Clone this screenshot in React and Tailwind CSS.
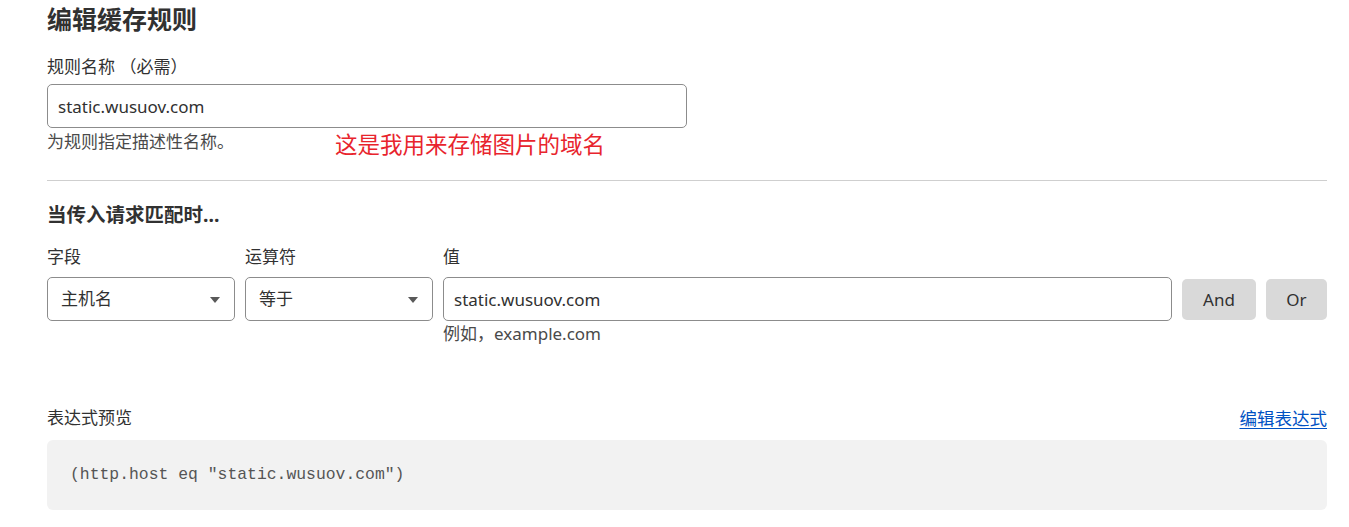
import { useState } from 'react';

const font = 'font-["Noto_Sans","Noto_Sans_CJK_SC",sans-serif]';

function Select({ value, className }) {
  return (
    <div className={`relative h-[44px] rounded-[5px] border border-[#8c8c8c] bg-white ${className}`}>
      <div className="flex h-full items-center pl-[13px] text-[17px] text-[#313131]">{value}</div>
      {/* dropdown caret */}
      <svg className="absolute right-[14px] top-[19px]" width="10" height="6" viewBox="0 0 10 6">
        <path d="M0 0H10L5 6Z" fill="#595959" />
      </svg>
    </div>
  );
}

export default function App() {
  const [name, setName] = useState('static.wusuov.com');
  const [value, setValue] = useState('static.wusuov.com');

  return (
    <div className={`min-h-screen w-full bg-white text-[#313131] ${font}`}>
      <div className="ml-[47px] w-[1280px] pt-[3px]">
        <h1 className="text-[25px] font-bold leading-[32px] text-[#313131]">编辑缓存规则</h1>

        <label className="mt-[20px] block text-[17px] leading-[24px]">规则名称 （必需）</label>
        <input
          value={name}
          onChange={(e) => setName(e.target.value)}
          className="mt-[5px] block h-[44px] w-[640px] rounded-[5px] border border-[#8c8c8c] px-[10px] text-[17px] text-[#313131] outline-none"
        />
        <div className="mt-[2px] flex items-start">
          <p className="w-[288px] text-[17px] leading-[24px] text-[#4a4a4a]">为规则指定描述性名称。</p>
          <p className="mt-[1px] text-[22.5px] leading-[28px] text-[#e8242d]">这是我用来存储图片的域名</p>
        </div>

        <hr className="mt-[21px] border-t border-[#cfcfcf]" />

        <h2 className="mt-[21px] text-[19.5px] font-bold leading-[26px]">当传入请求匹配时...</h2>

        <div className="mt-[17px] flex gap-[10px]">
          <div className="w-[188px]">
            <div className="text-[17px] leading-[24px]">字段</div>
            <Select value="主机名" className="mt-[8px]" />
          </div>
          <div className="w-[188px]">
            <div className="text-[17px] leading-[24px]">运算符</div>
            <Select value="等于" className="mt-[8px]" />
          </div>
          <div className="flex-1">
            <div className="text-[17px] leading-[24px]">值</div>
            <input
              value={value}
              onChange={(e) => setValue(e.target.value)}
              className="mt-[8px] block h-[44px] w-full rounded-[5px] border border-[#8c8c8c] px-[10px] text-[17px] text-[#313131] outline-none"
            />
            <div className="mt-[1px] text-[17px] leading-[24px] text-[#4a4a4a]">例如，example.com</div>
          </div>
          <div className="flex gap-[10px] pt-[34px]">
            <button className="h-[41px] w-[74px] rounded-[5px] bg-[#d9d9d9] text-[17px] text-[#313131]">And</button>
            <button className="h-[41px] w-[61px] rounded-[5px] bg-[#d9d9d9] text-[17px] text-[#313131]">Or</button>
          </div>
        </div>

        <div className="mt-[60px] flex items-end justify-between">
          <span className="text-[17px] leading-[24px]">表达式预览</span>
          <a href="#" className="text-[17.5px] leading-[24px] text-[#0051c3] underline underline-offset-[3px]">编辑表达式</a>
        </div>
        <div className="mt-[10px] flex h-[70px] items-center rounded-[6px] bg-[#f2f2f2] px-[23px]">
          <code className='font-["Liberation_Mono",monospace] text-[16.4px] text-[#555]'>(http.host eq "static.wusuov.com")</code>
        </div>
      </div>
    </div>
  );
}
